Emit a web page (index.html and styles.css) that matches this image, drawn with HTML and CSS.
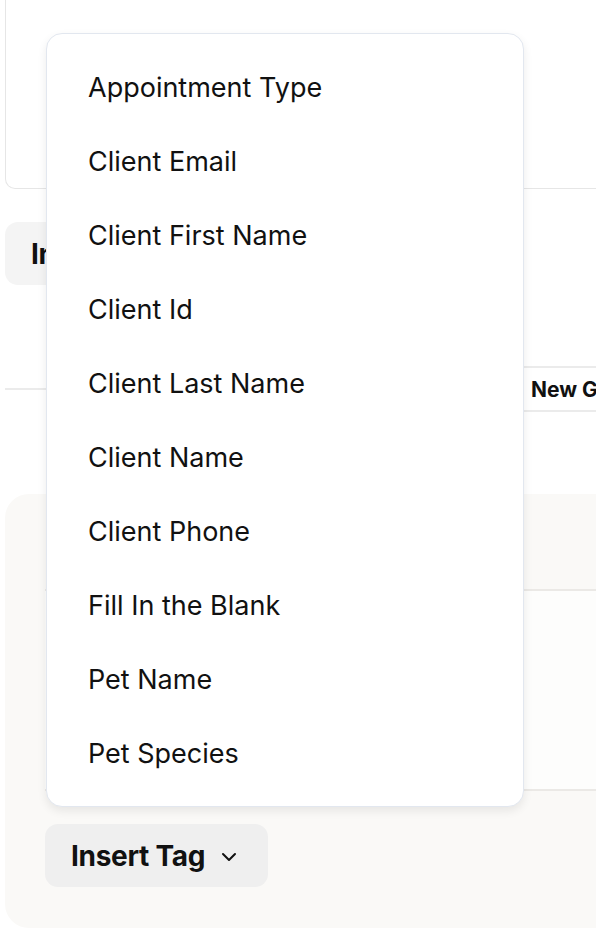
FILE: index.html
```html
<!DOCTYPE html>
<html>
<head>
<meta charset="utf-8">
<link rel="stylesheet" href="styles.css">
</head>
<body>
<div class="page">
  <div class="top-card"></div>

  <div class="tag-row">
    <button class="tag-btn">Insert Tag
      <svg class="chev" width="16" height="10" viewBox="0 0 16 10"><polyline points="2,2 8,8 14,2" fill="none" stroke="#111" stroke-width="2" stroke-linecap="round" stroke-linejoin="round"/></svg>
    </button>
  </div>

  <div class="divider">
    <div class="rule"></div>
    <button class="new-btn">New Group</button>
    <div class="rule"></div>
  </div>

  <div class="panel">
    <div class="editor">
      <div class="editor-head"></div>
      <div class="editor-body"></div>
    </div>
    <button class="tag-btn">Insert Tag
      <svg class="chev" width="16" height="10" viewBox="0 0 16 10"><polyline points="2,2 8,8 14,2" fill="none" stroke="#111" stroke-width="2" stroke-linecap="round" stroke-linejoin="round"/></svg>
    </button>
  </div>

  <ul class="menu">
    <li>Appointment Type</li>
    <li>Client Email</li>
    <li>Client First Name</li>
    <li>Client Id</li>
    <li>Client Last Name</li>
    <li>Client Name</li>
    <li>Client Phone</li>
    <li>Fill In the Blank</li>
    <li>Pet Name</li>
    <li>Pet Species</li>
  </ul>
</div>
</body>
</html>
```
FILE: styles.css
```css
* { box-sizing: border-box; }
html, body { margin: 0; padding: 0; background: #fff; }
body { font-family: Inter, "Liberation Sans", sans-serif; color: #111; overflow: hidden; }
.page { position: relative; width: 596px; height: 948px; padding-left: 5px; overflow: hidden; }

.top-card {
  height: 189px;
  width: 620px;
  border: 1px solid #e6e6e6;
  border-top: none;
  border-radius: 0 0 10px 10px;
}

.tag-row { margin-top: 33px; display: flex; }
.tag-btn {
  display: inline-flex;
  align-items: center;
  gap: 16px;
  height: 63px;
  padding: 0 31px 0 26px;
  border: none;
  border-radius: 13px;
  background: #efefef;
  font-family: Inter, "Liberation Sans", sans-serif;
  font-weight: 700;
  font-size: 28px;
  color: #111;
  letter-spacing: -0.3px;
}
.tag-row .tag-btn { background: #f4f4f4; }
.chev { display: block; margin-top: 2px; }

.divider { display: flex; align-items: center; margin-top: 81px; width: 700px; }
.rule { flex: 1; height: 2px; background: #ebebeb; }
.divider .rule:first-child { flex: 0 0 508px; }
.new-btn {
  height: 46px;
  padding: 0 16px;
  border: 2px solid #ebebeb;
  border-radius: 0;
  background: #fff;
  font-family: Inter, "Liberation Sans", sans-serif;
  font-weight: 700;
  font-size: 21px;
  color: #111;
}

.panel {
  margin-top: 82px;
  width: 640px;
  height: 434px;
  background: #faf9f7;
  border-radius: 24px;
  padding: 0 40px 40px 40px;
}
.editor-head { height: 95px; }
.editor-body {
  height: 202px;
  background: #fdfdfc;
  border-top: 2px solid #ebe9e6;
  border-bottom: 2px solid #ebe9e6;
}
.panel .tag-btn { margin-top: 33px; }

.menu {
  position: absolute;
  left: 46px;
  top: 33px;
  width: 478px;
  height: 774px;
  margin: 0;
  padding: 16px 0;
  list-style: none;
  background: #fff;
  border: 1.5px solid #e2e7ef;
  border-radius: 16px;
  box-shadow: 0 4px 10px rgba(0, 0, 0, 0.08);
}
.menu li {
  height: 74px;
  display: flex;
  align-items: center;
  padding-left: 41px;
  font-size: 27px;
  color: #111;
}
```
